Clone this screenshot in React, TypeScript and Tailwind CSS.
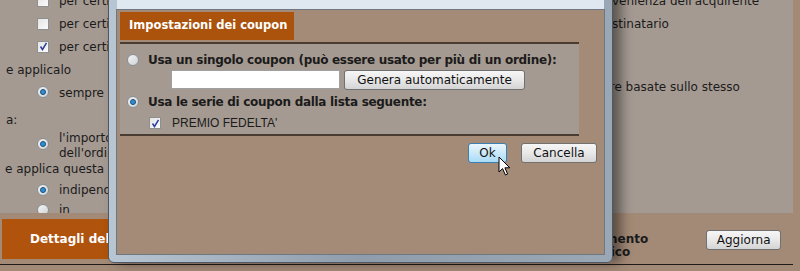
import React from "react";

const V = { fontFamily: '"DejaVu Sans", Verdana, sans-serif' };
const A = { fontFamily: '"Liberation Sans", Arial, sans-serif' };

function Radio({ on }: { on?: boolean }) {
  return (
    <span className="inline-flex h-[12px] w-[12px] shrink-0 items-center justify-center rounded-full border border-[#8a8f94] bg-gradient-to-br from-[#f4f4f4] to-[#cfd2d4]">
      {on && <span className="h-[6px] w-[6px] rounded-full border border-[#1c4f78] bg-[#2f8fd0]" />}
    </span>
  );
}

function Check({ on }: { on?: boolean }) {
  return (
    <span className="inline-flex h-[12px] w-[12px] shrink-0 items-center justify-center border border-[#8e8f8f] bg-gradient-to-br from-[#e4e4e4] to-[#fbfbfb]">
      {on && (
        <svg width="9" height="9" viewBox="0 0 9 9">
          <path d="M1.5 4.5 L3.5 7.5 L7.5 0.8" fill="none" stroke="#2a3f9c" strokeWidth="1.5" />
        </svg>
      )}
    </span>
  );
}

function Btn({ children, hot, w }: { children: React.ReactNode; hot?: boolean; w: string }) {
  return (
    <button
      style={V}
      className={`${w} h-[20px] rounded-[3px] border text-[12px] leading-none text-[#111] ${
        hot
          ? "border-[#3c7fb1] bg-gradient-to-b from-[#eaf6fd] to-[#a9dbf6]"
          : "border-[#707070] bg-gradient-to-b from-[#f6f6f6] via-[#e8e8e8] to-[#d4d4d4]"
      }`}
    >
      {children}
    </button>
  );
}

export default function App() {
  return (
    <div className="relative h-[271px] w-[800px] overflow-hidden bg-[#a38a77] text-[12px] text-[#1b1b1b]" style={V}>
      {/* background page */}
      <div className="relative h-[213px] w-[793px] overflow-hidden bg-[#a59a92]">
        <div className="-mt-[10px] flex">
          <div className="flex w-[605px] flex-col">
            <div className="flex h-[22px] items-center gap-[10px] pl-[37px]"><Check /><span>per certi paesi</span></div>
            <div className="flex h-[23px] items-center gap-[10px] pl-[37px]"><Check /><span>per certi paesi</span></div>
            <div className="flex h-[23px] items-center gap-[10px] pl-[37px]"><Check on /><span>per certi paesi</span></div>
            <div className="flex h-[23px] items-center pl-[6px]">e applicalo</div>
            <div className="flex h-[21px] items-center gap-[10px] pl-[37px]"><Radio on /><span className="mt-[3px]">sempre</span></div>
            <div className="h-[7px]" />
            <div className="flex h-[22px] items-center pl-[6px]">a:</div>
            <div className="flex h-[30px] items-start gap-[10px] pl-[37px]">
              <span className="mt-[3px]"><Radio on /></span>
              <span className="leading-[15px]">l'importo<br />dell'ordine</span>
            </div>
            <div className="flex h-[16px] items-center pl-[5px]">e applica questa</div>
            <div className="flex h-[26px] items-center gap-[10px] pl-[37px]"><Radio on /><span>indipendentemente</span></div>
            <div className="flex h-[14px] items-center gap-[10px] pl-[37px]"><Radio /><span>in</span></div>
          </div>
          <div className="flex flex-col whitespace-nowrap">
            <div className="flex h-[22px] items-center pl-[7px]">venienza dell'acquirente</div>
            <div className="flex h-[23px] items-center pl-[7px]">stinatario</div>
            <div className="h-[41px]" />
            <div className="flex h-[22px] items-center">tre basate sullo stesso</div>
          </div>
        </div>
      </div>
      <div className="flex h-[52px] w-[793px] items-center border-b border-[#1e1a17]">
        <div className="ml-[2px] flex h-[40px] w-[108px] items-center overflow-hidden whitespace-nowrap bg-[#b0530c] pl-[28px] text-[12px] font-bold text-white">
          Dettagli dell'ordine
        </div>
        <div className="ml-[495px] mt-[14px] text-[12px] font-bold leading-[13px]">mento<br />tico</div>
        <div className="ml-[58px] mt-[2px]"><Btn w="w-[75px]">Aggiorna</Btn></div>
      </div>

      {/* dialog window */}
      <div className="absolute left-[108px] top-[-30px] h-[293px] w-[505px] rounded-[6px] border border-[#4f5862] bg-gradient-to-r from-[#b8c6d4] via-[#8e9cab] to-[#9aa8b6] p-[7px] pt-[38px] shadow-[8px_0_12px_rgba(0,0,0,0.45)]">
        <div className="absolute left-[8px] right-[8px] top-[29px] h-[9px] bg-[#dfe8f1]" />
        <div className="relative flex h-full flex-col border border-[#6f7882] bg-[#a48b78] px-[3px] pt-[2px]">
          <div className="flex h-[28px] w-[174px] items-center bg-[#ab520d] pl-[9px] text-[11.5px] font-bold text-[#fff]">
            Impostazioni dei coupon
          </div>
          <div className="mt-[2px] w-[459px] border-y-2 border-[#4b3c32] bg-[#a59a91] pb-[2px] pt-[8px]">
            <div className="flex h-[16px] items-center gap-[9px] pl-[7px]">
              <Radio />
              <span className="whitespace-nowrap text-[12px] font-bold tracking-[-0.3px]">Usa un singolo coupon (può essere usato per più di un ordine):</span>
            </div>
            <div className="ml-[51px] mt-[2px] flex gap-[4px]">
              <div className="h-[19px] w-[169px] border border-[#a0a0a0] bg-white" />
              <Btn w="w-[181px]">Genera automaticamente</Btn>
            </div>
            <div className="mt-[4px] flex h-[16px] items-center gap-[9px] pl-[7px]">
              <Radio on />
              <span className="whitespace-nowrap text-[12px] font-bold tracking-[-0.3px]">Usa le serie di coupon dalla lista seguente:</span>
            </div>
            <div className="mt-[4px] flex h-[18px] items-center gap-[11px] pl-[29px]">
              <Check on />
              <span style={A} className="text-[12px]">PREMIO FEDELTA'</span>
            </div>
          </div>
          <div className="mt-[7px] flex gap-[14px] pl-[348px]">
            <Btn hot w="w-[39px]">Ok</Btn>
            <Btn w="w-[76px]">Cancella</Btn>
          </div>
        </div>
      </div>

      {/* mouse cursor */}
      <svg className="absolute left-[498px] top-[156px]" width="13" height="21" viewBox="0 0 13 21">
        <path d="M1 1 L1 16 L4.6 12.6 L7.4 19 L9.6 18 L6.9 11.8 L11.8 11.8 Z" fill="#fff" stroke="#000" strokeWidth="1" strokeLinejoin="round" />
      </svg>
    </div>
  );
}
